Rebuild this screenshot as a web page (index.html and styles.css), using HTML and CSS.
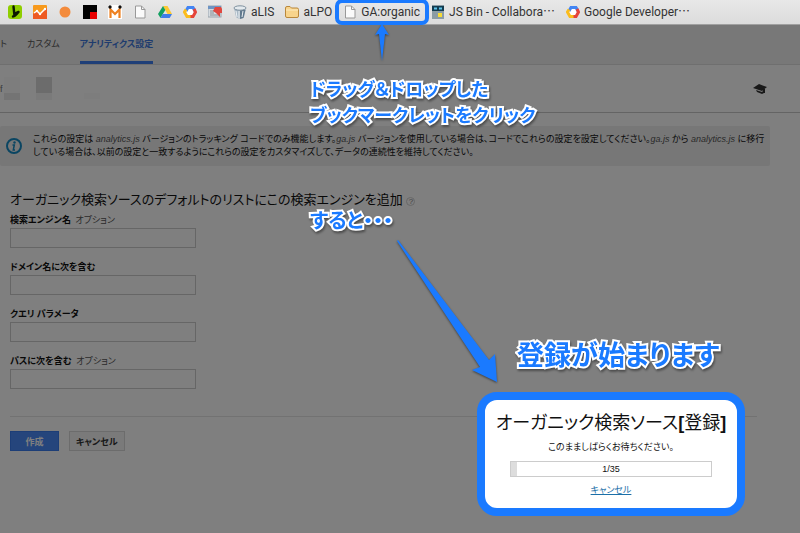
FILE: index.html
```html
<!DOCTYPE html>
<html lang="ja">
<head>
<meta charset="UTF-8" />
<meta name="viewport" content="width=device-width, initial-scale=1" />
<title>アナリティクス設定</title>
<link rel="stylesheet" href="styles.css">
</head>
<body>

<nav class="bookmarks">
  <a class="bookmark" href="#" aria-label="b1"><svg viewBox="0 0 14 14"><rect width="14" height="14" rx="3" fill="#8fce00"/><path d="M5.500 1.500L6.500 11M5 11.500C7 11.500 8.500 9.500 10.500 7M7 8.500L10 7" fill="none" stroke="#0c1800" stroke-width="2.400" stroke-linecap="round"/></svg></a>
  <a class="bookmark" href="#" aria-label="b2"><svg viewBox="0 0 14 14"><rect width="14" height="14" rx="1" fill="#f79a1d"/><path d="M0 9L4 6l3 3 7-6v11H0z" fill="#ee5b22"/><path d="M1 8l3-2 3 3 5-5" fill="none" stroke="#fff" stroke-width="1.500"/><circle cx="4" cy="6" r="1.200" fill="#fff"/><circle cx="7" cy="9" r="1.200" fill="#fff"/><circle cx="12" cy="4" r="1.200" fill="#fff"/></svg></a>
  <a class="bookmark" href="#" aria-label="b3"><svg viewBox="0 0 14 14"><circle cx="7" cy="7" r="5.500" fill="#f38b3c"/></svg></a>
  <a class="bookmark" href="#" aria-label="b4"><svg viewBox="0 0 14 14"><rect width="14" height="14" fill="#000"/><rect x="7" y="7" width="7" height="7" fill="#e80000"/></svg></a>
  <a class="bookmark" href="#" aria-label="b5"><svg viewBox="0 0 14 14"><rect width="14" height="14" fill="#fff"/><path d="M2.500 13V4.500L7 9l4.500-4.500V13" fill="none" stroke="#ee8120" stroke-width="2.200"/><circle cx="2" cy="2" r="1.700" fill="#111"/><circle cx="12" cy="2" r="1.700" fill="#111"/></svg></a>
  <a class="bookmark" href="#" aria-label="b6"><svg viewBox="0 0 14 14"><path d="M2.500 1h6l3.500 3.500V13h-9.500z" fill="#fafafa" stroke="#999"/><path d="M8.500 1v3.500H12" fill="none" stroke="#999"/></svg></a>
  <a class="bookmark" href="#" aria-label="b7"><svg viewBox="0 0 14 14"><path d="M5 1h4.500L14 9H9.500z" fill="#fcc934"/><path d="M5 1l2.300 4L2.500 13 0 9z" fill="#12a060"/><path d="M4.700 9H14l-2.300 4H2.500z" fill="#3f7de8"/></svg></a>
  <a class="bookmark" href="#" aria-label="b8"><svg viewBox="0 0 14 14"><circle cx="7" cy="7" r="4" fill="#fff"/><path d="M3 6l2-3.500h5L12 6" fill="none" stroke="#4285f4" stroke-width="3"/><path d="M11 4l1.500 3L10 11.500H7" fill="none" stroke="#e5443a" stroke-width="3"/><path d="M3 4.500L1.500 7 4 11.500h3.500" fill="none" stroke="#fbbc1c" stroke-width="3"/></svg></a>
  <a class="bookmark" href="#" aria-label="b9"><svg viewBox="0 0 14 14"><rect y="1" width="13" height="11" fill="#d5dbe0" stroke="#9aa4ad"/><rect y="1" width="13" height="3" fill="#6d94c4"/><path d="M2 6h5M2 8h4M2 10h9" stroke="#8a8f94"/><path d="M7 2h6l1 2v4h-2v4L8 8 5 6z" fill="#e0473f"/></svg></a>
  <a class="bookmark" href="#"><svg viewBox="0 0 14 14"><path d="M1 3l2 9c2 2 6 2 8 0l2-9z" fill="#a7b7c4"/><path d="M7 5h5.500l-2 8-3.500 1z" fill="#61798d"/><ellipse cx="7" cy="3" rx="6" ry="2.200" fill="#e4eaee" stroke="#7e909e"/><path d="M3 6l1 6M6 6v7M10 6l-1 6" stroke="#edf1f4"/></svg><span>aLIS</span></a>
  <a class="bookmark" href="#"><svg viewBox="0 0 14 14"><path d="M.5 3q0-1.500 1.500-1.500h3L6.500 3H12q1.500 0 1.500 1.500V11q0 1.500-1.500 1.500H2Q.5 12.500.5 11z" fill="#f8d48c" stroke="#b9883c"/><path d="M1 5h12" stroke="#fdebc0"/></svg><span>aLPO</span></a>
  <a class="bookmark bookmark-marked" href="#"><svg viewBox="0 0 14 14"><path d="M2.500 1h6l3.500 3.500V13h-9.500z" fill="#fafafa" stroke="#999"/><path d="M8.500 1v3.500H12" fill="none" stroke="#999"/></svg><span>GA:organic</span></a>
  <a class="bookmark" href="#"><svg viewBox="0 0 14 14"><rect x="1" width="12" height="14" fill="#8b9ca4"/><rect x="1" y="1" width="12" height="5" fill="#123c50"/><path d="M3 3.500h3M8 3.500h3" stroke="#5fc4ea" stroke-width="2"/><rect x="7" y="8" width="4" height="4" fill="#f7dc36"/></svg><span>JS Bin - Collabora<span class="dots">…</span></span></a>
  <a class="bookmark" href="#"><svg viewBox="0 0 14 14"><circle cx="7" cy="7" r="4" fill="#fff"/><path d="M3 6l2-3.500h5L12 6" fill="none" stroke="#4285f4" stroke-width="3"/><path d="M11 4l1.500 3L10 11.500H7" fill="none" stroke="#e5443a" stroke-width="3"/><path d="M3 4.500L1.500 7 4 11.500h3.500" fill="none" stroke="#fbbc1c" stroke-width="3"/></svg><span>Google Developer<span class="dots">…</span></span></a>
</nav>

<div class="screen">
  <nav class="tabs">
    <a class="tab" href="#">ト</a>
    <a class="tab" href="#">カスタム</a>
    <a class="tab tab-active" href="#">アナリティクス設定</a>
  </nav>

  <div class="account">
    <span class="account-name">f</span>
    <svg class="mosaic" viewBox="0 0 100 24"><path d="M0 0h16v16H0z" fill="#fbfbfb"/><path d="M0 16h16v7H0z" fill="#e8e8e8"/><path d="M32 0h16v16H32z" fill="#d8d8d8"/><path d="M32 16h16v7H32z" fill="#f4f4f4"/><path d="M80 16h16v6H80z" fill="#fafafa"/></svg>
    <svg class="cap" viewBox="0 0 14 10"><path d="M0 4l6-4 8 3-5 4zM3 6l6 2 2-2v3L9 10 4 8z" fill="#333"/><path d="M11 5v4" stroke="#333" stroke-width="2"/></svg>
  </div>

  <main class="content">
    <div class="notice">
      <svg class="notice-icon" viewBox="0 0 16 16"><circle cx="8" cy="8" r="7" fill="none" stroke="#158bc4" stroke-width="2"/><circle cx="8.500" cy="4.500" r="1.200" fill="#158bc4"/><path d="M6.500 7h1.800l-1 5h1.700" fill="none" stroke="#158bc4" stroke-width="1.500"/></svg>
      <p>これらの設定は <em>analytics.js</em> バージョンのトラッキング コードでのみ機能します。<em>ga.js</em> バージョンを使用している場合は、コードでこれらの設定を設定してください。<em>ga.js</em> から <em>analytics.js</em> に移行している場合は、以前の設定と一致するようにこれらの設定をカスタマイズして、データの連続性を維持してください。</p>
    </div>

    <form class="engine-form">
      <h1>オーガニック検索ソースのデフォルトのリストにこの検索エンジンを追加 <span class="help">?</span></h1>

      <div class="field">
        <label for="engine">検索エンジン名 <small>オプション</small></label>
        <input type="text" id="engine" name="engine" />
      </div>
      <div class="field">
        <label for="domain">ドメイン名に次を含む</label>
        <input type="text" id="domain" name="domain" />
      </div>
      <div class="field">
        <label for="query">クエリ パラメータ</label>
        <input type="text" id="query" name="query" />
      </div>
      <div class="field">
        <label for="path">パスに次を含む <small>オプション</small></label>
        <input type="text" id="path" name="path" />
      </div>

      <div class="actions">
        <button type="submit" class="btn btn-primary">作成</button>
        <button type="button" class="btn">キャンセル</button>
      </div>
    </form>
  </main>

  <div class="dim"></div>

  <section class="dialog" role="dialog" aria-labelledby="dialogTitle">
    <h2 id="dialogTitle">オーガニック検索ソース<b>[</b>登録<b>]</b></h2>
    <p>このまましばらくお待ちください。</p>
    <div class="progress"><div class="progress-bar" style="width: 2.86%"></div><span>1/35</span></div>
    <a href="#">キャンセル</a>
  </section>
</div>

<!-- callouts -->
<svg class="arrow arrow-up" viewBox="0 0 16 38"><path d="M8 0l7 11-4-1-3 27L5 10l-4 1z"/></svg>
<svg class="arrow arrow-down" viewBox="0 0 104 146"><path d="M2 1L93 121l6-6 2 28-25-12 8-3L1 2z"/></svg>
<p class="callout callout-drag">ドラッグ＆ドロップした<br>ブックマークレットをクリック</p>
<p class="callout callout-then">すると・・・</p>
<p class="callout callout-start">登録が始まります</p>

</body>
</html>
```

FILE: styles.css
```css
* {
  box-sizing: border-box;
}
body {
  margin: 0;
  min-height: 100vh;
  display: flex;
  flex-direction: column;
  position: relative;
  overflow: hidden;
  font-family: "Liberation Sans", "Noto Sans CJK JP", sans-serif;
  font-size: 9px;
  font-feature-settings: "palt";
  color: #111;
  background: #fff;
}
h1, h2, p {
  margin: 0;
  font-weight: 400;
}

/* bookmark bar */
.bookmarks {
  display: flex;
  align-items: center;
  gap: 11px;
  height: 25px;
  padding: 0 8px;
  background: linear-gradient(#e8e8e8, #dcdcdc);
  border-bottom: 1px solid #a0a0a0;
  font-family: Roboto, "Noto Sans CJK JP", sans-serif;
  font-size: 12px;
  line-height: 16px;
}
.bookmark {
  display: flex;
  align-items: center;
  gap: 4px;
  position: relative;
  flex: none;
  color: #333;
  text-decoration: none;
}
.bookmark svg {
  width: 14px;
  height: 14px;
}
.dots {
  font-family: "Noto Sans CJK JP", sans-serif;
  line-height: 1;
}
.bookmark-marked::after {
  content: "";
  position: absolute;
  inset: -5px -9px -5px -8px;
  border: 4px solid #1a7aff;
  border-radius: 7px;
  z-index: 2;
}

/* analytics screen */
.screen {
  flex: 1;
  position: relative;
}
.tabs {
  display: flex;
  gap: 20px;
  height: 40px;
  background: #f1f1f1;
  border-bottom: 1px solid #dedede;
}
.tab {
  display: flex;
  align-items: center;
  color: #555;
  text-decoration: none;
  border-bottom: 3px solid transparent;
}
.tab-active {
  color: #3f78dc;
  font-weight: 700;
  border-color: #3f7ff0;
}
.account {
  display: flex;
  align-items: center;
  height: 48px;
  padding-right: 33px;
  border-bottom: 1px solid #c8c8c8;
}
.account-name {
  width: 4px;
  color: #777;
}
.mosaic {
  width: 100px;
  height: 24px;
}
.cap {
  width: 14px;
  height: 10px;
  margin-left: auto;
}
.content {
  padding: 13px 30px 20px 0;
}
.notice {
  display: flex;
  align-items: center;
  gap: 11px;
  padding: 7px 0 7px 6px;
  background: #eee;
  border-radius: 2px;
  line-height: 13px;
}
.notice-icon {
  flex: none;
  width: 16px;
  height: 16px;
}
.notice em {
  color: #555;
}
.engine-form {
  padding: 24px 13px 0 10px;
}
.engine-form h1 {
  margin-bottom: 3px;
  font-size: 13px;
  line-height: 20px;
}
.help {
  display: inline-block;
  width: 9px;
  height: 9px;
  border: 1px solid #d0d0d0;
  border-radius: 50%;
  font-size: 8px;
  line-height: 8px;
  text-align: center;
  color: #888;
}
.field {
  display: flex;
  flex-direction: column;
  align-items: flex-start;
  gap: 1px;
  margin-bottom: 12px;
}
.field label {
  font-weight: 700;
  line-height: 14px;
}
.field small {
  margin-left: 2px;
  font-size: 9px;
  font-weight: 400;
  color: #555;
}
.field input {
  width: 186px;
  height: 20px;
  padding: 0 4px;
  border: 1px solid #ccc;
  background: #fff;
}
.actions {
  display: flex;
  gap: 10px;
  margin-top: 27px;
  padding-top: 14px;
  border-top: 1px solid #e4e4e4;
}
.btn {
  height: 20px;
  min-width: 49px;
  padding: 0 6px;
  border: 1px solid #d8d8d8;
  background: #f4f4f4;
  color: #333;
  font: inherit;
  font-feature-settings: inherit;
  font-weight: 700;
}
.btn-primary {
  border-color: #3a7cee;
  background: #4b8bf8;
  color: #fff;
}
.dim {
  position: absolute;
  inset: 0;
  background: rgba(0, 0, 0, 0.5);
}

/* progress dialog */
.dialog {
  position: absolute;
  right: 55px;
  bottom: 17px;
  display: flex;
  flex-direction: column;
  align-items: center;
  width: 268px;
  padding: 10px 8px 11px;
  border: 8px solid #1a7aff;
  border-radius: 20px;
  background: #fff;
}
.dialog h2 {
  font-size: 18px;
  line-height: 26px;
  white-space: nowrap;
}
.dialog p {
  margin-top: 4px;
  line-height: 14px;
}
.progress {
  position: relative;
  width: 202px;
  height: 16px;
  margin: 7px 0 6px;
  border: 1px solid #ccc;
  line-height: 14px;
  text-align: center;
}
.progress-bar {
  position: absolute;
  inset: 0 auto 0 0;
  background: #ddd;
}
.dialog a {
  color: #1b6fa8;
  line-height: 14px;
}

/* callouts */
.arrow {
  position: absolute;
  fill: #1a7aff;
  filter: drop-shadow(0 1px 1px rgba(0, 0, 0, 0.5));
}
.arrow-up {
  left: 374px;
  top: 24px;
  width: 16px;
  height: 38px;
}
.arrow-down {
  left: 396px;
  top: 239px;
  width: 104px;
  height: 146px;
}
.callout {
  position: absolute;
  color: #1a7aff;
  font-family: "Noto Sans CJK JP", sans-serif;
  font-size: 18px;
  font-weight: 700;
  line-height: 26px;
  white-space: nowrap;
  -webkit-text-stroke: 4px #fff;
  paint-order: stroke fill;
  filter: drop-shadow(1px 2px 1px rgba(0, 0, 0, 0.4));
}
.callout-drag {
  left: 310px;
  top: 75px;
}
.callout-then {
  left: 310px;
  top: 207px;
  font-size: 20px;
}
.callout-start {
  left: 517px;
  top: 337px;
  font-size: 27px;
  line-height: 34px;
}
```
